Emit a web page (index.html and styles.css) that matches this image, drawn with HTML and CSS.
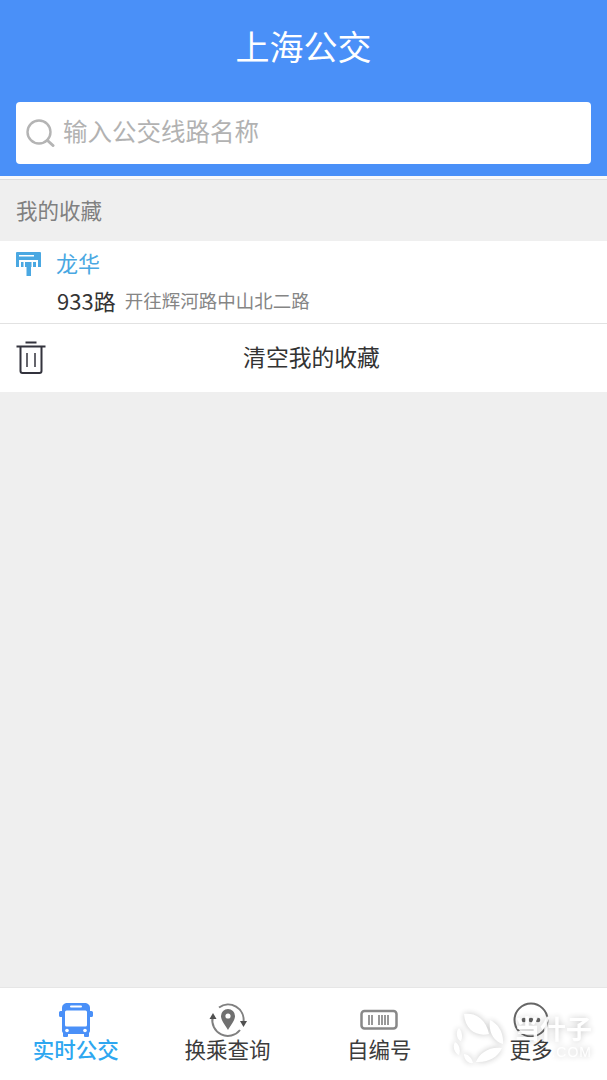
FILE: index.html
```html
<!DOCTYPE html>
<html lang="zh-CN">
<head>
    <meta charset="UTF-8">
    <meta name="viewport" content="width=device-width, initial-scale=1.0">
    <title>上海公交</title>
    <link rel="stylesheet" href="styles.css">
</head>
<body>
    <div class="app">
        <header class="top">
            <h1 class="title">上海公交</h1>
            <div class="search">
                <svg class="search-icon" width="30" height="28" viewBox="0 0 30 28">
                    <circle cx="13" cy="13" r="11.5" fill="none" stroke="#b4b4b4" stroke-width="2.4"/>
                    <path d="M21.5 21.5l5.5 5" fill="none" stroke="#b4b4b4" stroke-width="3" stroke-linecap="round"/>
                </svg>
                <span class="search-text">输入公交线路名称</span>
            </div>
        </header>

        <main class="content">
            <div class="section-title">我的收藏</div>

            <div class="fav">
                <div class="fav-name">
                    <svg class="stop-icon" width="26" height="24" viewBox="0 0 26 24">
                        <path d="M1 0h23a1 1 0 0 1 1 1v14h-3v-5h-2v5h-3v-5h-1.500v5H15v9h-4.500v-9H9v-5H7.500v5H5v-5H3v5H0V1a1 1 0 0 1 1-1z" fill="#4aa8e2"/>
                        <rect x="3" y="3" width="15" height="1.500" fill="#fff"/>
                        <rect x="3" y="8" width="19" height="2" fill="#fff"/>
                    </svg>
                    <span class="stop-name">龙华</span>
                </div>
                <div class="fav-line">
                    <span class="line-no">933路</span>
                    <span class="line-dir">开往辉河路中山北二路</span>
                </div>
            </div>

            <div class="clear">
                <svg class="trash-icon" width="30" height="33" viewBox="0 0 30 33">
                    <path d="M0.500 5.500h29M9.500 1.500h11" fill="none" stroke="#33333d" stroke-width="1.800"/>
                    <path d="M4.500 6v24a2 2 0 0 0 2 2h17a2 2 0 0 0 2-2V6" fill="none" stroke="#33333d" stroke-width="2"/>
                    <path d="M11 12v14M19 12v14" fill="none" stroke="#33333d" stroke-width="1.500"/>
                </svg>
                <span class="clear-text">清空我的收藏</span>
            </div>
        </main>

        <nav class="tabs">
            <div class="tab active">
                <svg class="tab-icon" width="36" height="36" viewBox="0 0 36 36">
                    <path d="M10 1h16c4 0 6 2 6 5v3h1.500a1.500 1.500 0 0 1 1.500 1.500v3a1.500 1.500 0 0 1-1.500 1.500H32v14a3 3 0 0 1-1 2v3a1 1 0 0 1-1 1h-3a1 1 0 0 1-1-1v-2H10v2a1 1 0 0 1-1 1H6a1 1 0 0 1-1-1v-3a3 3 0 0 1-1-2V15H2.500A1.500 1.500 0 0 1 1 13.500v-3A1.500 1.500 0 0 1 2.500 9H4V6c0-3 2-5 6-5z" fill="#4a90f8"/>
                    <rect x="7" y="8.500" width="22" height="16" rx="1.500" fill="#fff"/>
                    <rect x="12" y="3.500" width="12" height="2" rx="1" fill="#fff"/>
                    <circle cx="9" cy="28.500" r="1.800" fill="#fff"/>
                    <circle cx="27" cy="28.500" r="1.800" fill="#fff"/>
                </svg>
                <span>实时公交</span>
            </div>
            <div class="tab">
                <svg class="tab-icon" width="40" height="36" viewBox="0 0 40 36">
                    <path d="M4.700 15A15.500 15.500 0 0 0 32 28" fill="none" stroke="#808080" stroke-width="2"/>
                    <path d="M35.500 20A15.500 15.500 0 0 0 11 5.500" fill="none" stroke="#808080" stroke-width="2"/>
                    <path d="M1.500 17l3.500-6 3.500 6z" fill="#505050"/>
                    <path d="M32 19l3.500 6 3.500-6z" fill="#505050"/>
                    <path d="M20 7a7 7 0 0 1 7 7c0 5-4.500 9-7 14-2.500-5-7-9-7-14a7 7 0 0 1 7-7z" fill="#707070"/>
                    <circle cx="20" cy="14" r="2.600" fill="#fff"/>
                </svg>
                <span>换乘查询</span>
            </div>
            <div class="tab">
                <svg class="tab-icon" width="38" height="36" viewBox="0 0 38 36">
                    <rect x="1.500" y="9" width="35" height="17.500" rx="3" fill="none" stroke="#888" stroke-width="2.500"/>
                    <path d="M9 13v10M12 13v10M19 13v10M22 13v10M25 13v10M28 13v10" stroke="#777" stroke-width="1.500"/>
                </svg>
                <span>自编号</span>
            </div>
            <div class="tab">
                <svg class="tab-icon" width="36" height="36" viewBox="0 0 36 36">
                    <circle cx="18" cy="18" r="16.500" fill="none" stroke="#666" stroke-width="2"/>
                    <circle cx="11" cy="18" r="2.300" fill="#666"/>
                    <circle cx="18" cy="18" r="2.300" fill="#666"/>
                    <circle cx="25" cy="18" r="2.300" fill="#666"/>
                </svg>
                <span>更多</span>
            </div>
        </nav>

        <div class="watermark">
            <svg class="wm-logo" width="52" height="52" viewBox="0 0 52 52">
                <path d="M12 2c10-2 22 4 25 20-12 3-24-4-25-20zM38 8c8 4 14 12 13 24-9-2-15-12-13-24zM50 36c-4 9-14 15-26 14 3-9 14-16 26-14zM7 16c3 3 4 9 2 13-4-1-6-9-2-13zM3 30c4 2 6 8 4 13-4-2-7-8-4-13zM12 42c4 0 8 4 9 9-5 1-9-4-9-9z" fill="#fff"/>
            </svg>
            <span class="wm-name">当什子</span>
            <span class="wm-com">.COM</span>
        </div>
    </div>
</body>
</html>
```

FILE: styles.css
```css
* {
    box-sizing: border-box;
}

body {
    margin: 0;
    font-family: "Noto Sans CJK SC", "Liberation Sans", sans-serif;
    background-color: #efefef;
}

.app {
    position: relative;
    height: 1080px;
    display: flex;
    flex-direction: column;
    overflow: hidden;
}

/* header */
.top {
    height: 176px;
    background-color: #4a90f8;
    padding: 0 16px;
    flex-shrink: 0;
}

.title {
    margin: 0;
    height: 102px;
    padding-top: 25px;
    font-size: 34px;
    line-height: 42px;
    font-weight: 400;
    color: #fff;
    text-align: center;
}

.search {
    height: 62px;
    background-color: #fff;
    border-radius: 4px;
    display: flex;
    align-items: center;
    padding-left: 10px;
    gap: 7px;
}

.search-text {
    font-size: 24.500px;
    color: #b2b2b2;
    margin-top: -6px;
}

/* list */
.content {
    flex: 1;
    border-top: 3px solid #fafafa;
}

.section-title {
    height: 62px;
    border-top: 1px solid #dedede;
    padding: 0 0 2px 16px;
    display: flex;
    align-items: center;
    font-size: 21.500px;
    color: #808080;
}

.fav {
    height: 83px;
    background-color: #fff;
    border-bottom: 1px solid #e2e2e2;
    padding: 11px 0 0 16px;
}

.fav-name {
    display: flex;
    align-items: center;
    height: 24px;
    gap: 14px;
}

.stop-name {
    font-size: 22px;
    color: #4aa8e2;
    margin-top: -4px;
}

.fav-line {
    margin: 11px 0 0 41px;
    display: flex;
    align-items: center;
    height: 26px;
    gap: 9px;
}

.line-no {
    font-size: 22px;
    color: #333;
}

.line-dir {
    font-size: 18.500px;
    color: #858585;
}

.clear {
    position: relative;
    height: 68px;
    background-color: #fff;
    display: flex;
    align-items: center;
    justify-content: center;
    padding: 0 0 4px 16px;
}

.trash-icon {
    position: absolute;
    left: 16px;
    top: 17px;
}

.clear-text {
    font-size: 22.800px;
    color: #333;
}

/* bottom tabs */
.tabs {
    height: 93px;
    flex-shrink: 0;
    background-color: #fff;
    border-top: 1px solid #e6e6e6;
    display: flex;
    padding: 14px 0 0;
    justify-content: space-between;
}

.tab {
    width: 152px;
    display: flex;
    flex-direction: column;
    align-items: center;
    font-size: 21.500px;
    line-height: 28px;
    color: #3c3c3c;
}

.tab-icon {
    height: 36px;
    margin-bottom: -3px;
}

.tab.active {
    color: #2ea7f0;
    font-weight: 500;
}

/* watermark over the last tab */
.watermark {
    position: absolute;
    left: 452px;
    top: 1012px;
    width: 142px;
    height: 52px;
    opacity: 0.9;
    filter: drop-shadow(0 0 3px rgba(0, 0, 0, 0.25));
}

.wm-logo {
    position: absolute;
    left: 0;
    top: 0;
}

.wm-name {
    position: absolute;
    right: 2px;
    top: 6px;
    font-size: 26px;
    line-height: 20px;
    font-weight: 700;
    color: #fff;
}

.wm-com {
    position: absolute;
    right: 2px;
    top: 33px;
    font-family: "Liberation Sans", sans-serif;
    font-size: 14px;
    line-height: 15px;
    letter-spacing: 1px;
    color: #fff;
}
```
